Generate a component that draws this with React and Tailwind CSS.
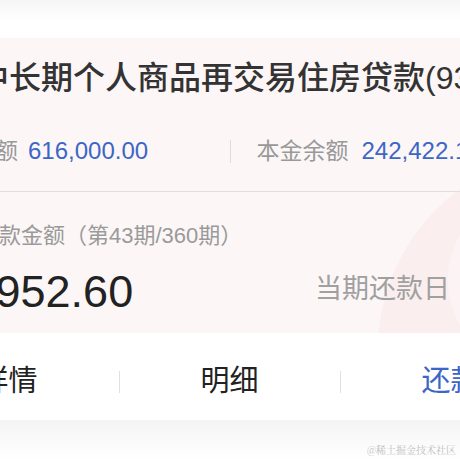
export default function App() {
  const font = { fontFamily: '"Liberation Sans", "Noto Sans CJK SC", sans-serif' };
  return (
    <div className="relative w-[460px] h-[460px] overflow-hidden bg-white" style={font}>
      <div className="h-[22px] bg-gradient-to-b from-[#f6f6f6] to-white" />
      <div className="h-[16px] bg-white" />
      <div className="-ml-[102px] w-[663px]">
        <div className="relative h-[295px] overflow-hidden bg-[#fcf6f6]">
          <div className="absolute left-[480px] top-[113px] w-[398px] h-[398px] rounded-full bg-[#faeeee]" />
          <div className="absolute left-[550px] top-[150px] w-[184px] h-[184px] rounded-full bg-[#fcf4f4]" />
          <div className="relative">
            <div className="pt-[22px] pl-[79px] text-[32px] leading-[37px] font-medium text-[#333333] whitespace-nowrap">
              中长期个人商品再交易住房贷款(9358)
            </div>
            <div className="mt-[36px] grid grid-cols-2 h-[30px] items-center">
              <div className="flex items-center pl-[28px] whitespace-nowrap">
                <span className="text-[23px] text-[#999999]">贷款金额</span>
                <span className="ml-[10px] text-[24px] text-[#3c66c6]">616,000.00</span>
              </div>
              <div className="flex items-center h-[30px] relative pl-[27px] whitespace-nowrap">
                <div className="absolute left-0 top-[4px] w-px h-[23px] bg-[#dddddd]" />
                <span className="text-[23px] text-[#999999]">本金余额</span>
                <span className="ml-[13px] text-[24px] text-[#3c66c6]">242,422.18</span>
              </div>
            </div>
            <div className="mt-[28px] h-px bg-[#e2dede]" />
            <div className="mt-[30px] pl-[35px] text-[22px] leading-[28px] text-[#9a9a9a] whitespace-nowrap">
              本期还款金额（第43期/360期）
            </div>
            <div className="mt-[19px] flex items-center pl-[60px] whitespace-nowrap">
              <div className="w-[357px] text-[45px] leading-[45px] font-medium text-[#222222]">2,952.60</div>
              <span className="mb-[5px] text-[27px] text-[#a0a0a0]">当期还款日</span>
            </div>
          </div>
        </div>
        <div className="grid grid-cols-3 h-[87px] pt-[11px] items-center">
          <div className="relative flex items-center justify-center text-[29px] text-[#222222]">
            详情
          </div>
          <div className="relative flex items-center justify-center text-[29px] text-[#222222]">
            <div className="absolute left-0 top-1/2 -translate-y-1/2 w-px h-[22px] bg-[#e0e0e0]" />
            明细
          </div>
          <div className="relative flex items-center justify-center text-[29px] text-[#3c66c6]">
            <div className="absolute left-0 top-1/2 -translate-y-1/2 w-px h-[22px] bg-[#e0e0e0]" />
            还款
          </div>
        </div>
      </div>
      <div className="h-[40px] bg-gradient-to-b from-[#f4f4f4] to-white" />
      <div
        className="absolute right-[4px] bottom-[4px] text-[10px] leading-[12px] text-[#bdbdbd]"
        style={{ fontFamily: '"Noto Serif CJK SC", "Noto Sans CJK SC", serif' }}
      >
        @稀土掘金技术社区
      </div>
    </div>
  );
}
